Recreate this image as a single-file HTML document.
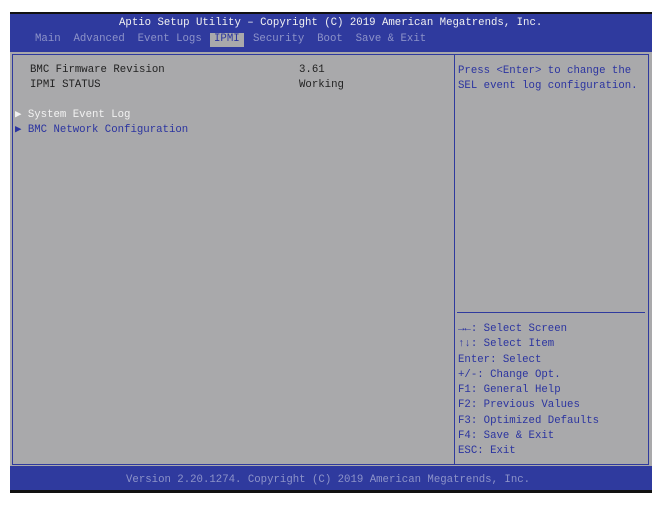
<!DOCTYPE html>
<html><head><style>
body{margin:0;width:662px;height:506px;background:#fff;position:relative;overflow:hidden;font-family:"Liberation Mono",monospace;font-size:10.7px;}
.t{position:absolute;white-space:pre;line-height:13px}
#top{position:absolute;left:10px;top:12px;width:642px;height:40px;background:#2f3a9e;border-top:2px solid #111;}
#main{position:absolute;left:10px;top:52px;width:642px;height:414px;background:#a9a9ab;}
#frame{position:absolute;left:12px;top:54px;width:635px;height:409px;border:1px solid #2f3a9e;}
#div{position:absolute;left:454px;top:54px;width:1px;height:411px;background:#2f3a9e;}
#hl{position:absolute;left:457px;top:312px;width:188px;height:1px;background:#2f3a9e;}
#bot{position:absolute;left:10px;top:466px;width:642px;height:24px;background:#2f3a9e;border-bottom:3px solid #111;}
.d{color:#222}.b{color:#2b34a0}.w{color:#f2f2f2}.g{color:#8d93c9}
</style></head><body>
<div id="top"></div><div id="main"></div><div id="frame"></div><div id="div"></div><div id="hl"></div><div id="bot"></div>
<div class="t w" style="left:119px;top:17px">Aptio Setup Utility – Copyright (C) 2019 American Megatrends, Inc.</div>
<div class="t g" style="left:35px;top:33px">Main  Advanced  Event Logs</div>
<div style="position:absolute;left:210px;top:33px;width:34px;height:14px;background:#a9a9ab"></div>
<div class="t" style="left:214px;top:33px;color:#2b34a0">IPMI</div>
<div class="t g" style="left:253px;top:33px">Security  Boot  Save &amp; Exit</div>
<div class="t d" style="left:30px;top:64px">BMC Firmware Revision</div>
<div class="t d" style="left:30px;top:79px">IPMI STATUS</div>
<div class="t d" style="left:299px;top:64px">3.61</div>
<div class="t d" style="left:299px;top:79px">Working</div>
<div class="t w" style="left:15px;top:109px">▶ System Event Log</div>
<div class="t b" style="left:15px;top:124px">▶ BMC Network Configuration</div>
<div class="t b" style="left:458px;top:64px;line-height:15px">Press &lt;Enter&gt; to change the
SEL event log configuration.</div>
<div class="t b" style="left:458px;top:322px;line-height:15.3px">→←: Select Screen
↑↓: Select Item
Enter: Select
+/-: Change Opt.
F1: General Help
F2: Previous Values
F3: Optimized Defaults
F4: Save &amp; Exit
ESC: Exit</div>
<div class="t g" style="left:126px;top:474px">Version 2.20.1274. Copyright (C) 2019 American Megatrends, Inc.</div>
</body></html>
